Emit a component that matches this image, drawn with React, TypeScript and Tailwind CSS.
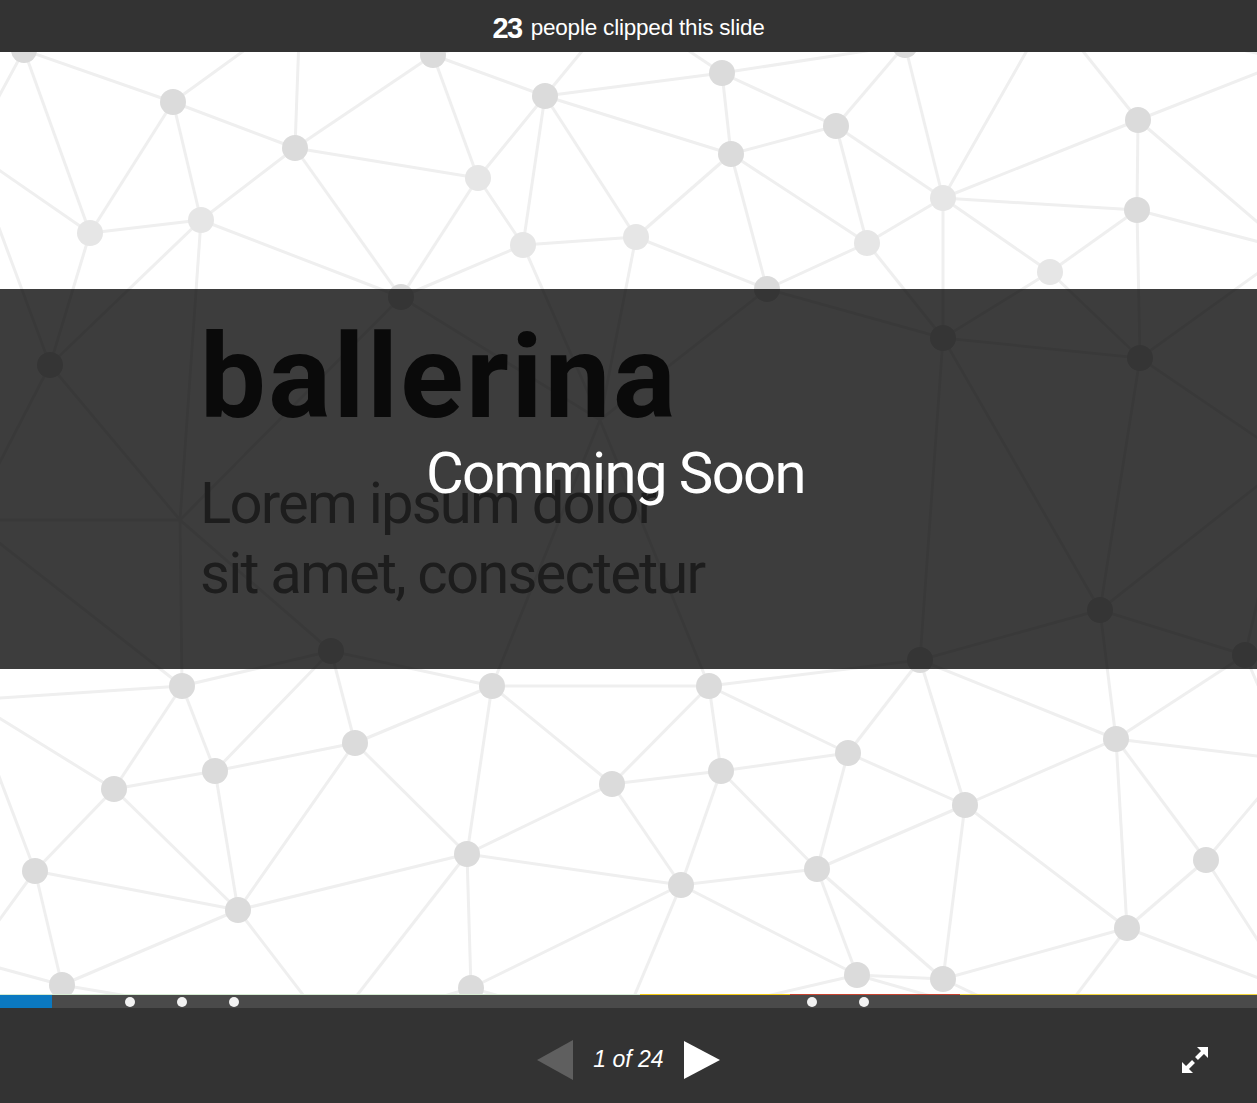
import React from 'react';

// Slide background: a light network of nodes joined by a Delaunay mesh
// third value: 1 = lighter node, 2 = mesh point only (no circle)
type Node = [number, number, number?];

const nodes: Node[] = [
  // upper band
  [24, 50], [173, 102], [295, 148], [433, 55], [545, 96], [478, 178, 1], [722, 73], [731, 154],
  [836, 126], [905, 45], [943, 198, 1], [1138, 120], [1137, 210], [90, 233, 1], [201, 220, 1],
  [523, 245, 1], [636, 237, 1], [867, 243, 1], [1050, 272, 1], [767, 289], [401, 297],
  [-30, 150], [1290, 60], [1290, 250], [300, 10], [620, 5], [1050, 10],
  // hidden behind the overlay
  [50, 365], [943, 338], [1140, 358], [1100, 610], [331, 651], [920, 660], [1245, 655],
  [600, 420, 2], [180, 520, 2], [-30, 520], [1290, 460],
  // lower band
  [182, 686], [492, 686], [709, 686], [355, 743], [215, 771], [114, 789], [612, 784], [721, 771],
  [848, 753], [1116, 739], [965, 805], [467, 854], [35, 871], [238, 910], [681, 885], [817, 869],
  [1206, 860], [1127, 928], [62, 985], [857, 975], [943, 979], [471, 988],
  [1290, 760], [-30, 700], [-30, 960], [1290, 990], [330, 1030], [620, 1030], [1050, 1030]
];

type Tri = { a: number; b: number; c: number; x: number; y: number; r: number };

function meshEdges(pts: [number, number][]): [number, number][] {
  const n = pts.length;
  const all: [number, number][] = [...pts, [-20000, -20000], [20000, -20000], [0, 20000]];
  const circ = (a: number, b: number, c: number): Tri => {
    const [ax, ay] = all[a];
    const [bx, by] = all[b];
    const [cx, cy] = all[c];
    const d = 2 * (ax * (by - cy) + bx * (cy - ay) + cx * (ay - by));
    const ux = ((ax * ax + ay * ay) * (by - cy) + (bx * bx + by * by) * (cy - ay) + (cx * cx + cy * cy) * (ay - by)) / d;
    const uy = ((ax * ax + ay * ay) * (cx - bx) + (bx * bx + by * by) * (ax - cx) + (cx * cx + cy * cy) * (bx - ax)) / d;
    return { a, b, c, x: ux, y: uy, r: (ax - ux) ** 2 + (ay - uy) ** 2 };
  };
  let tris: Tri[] = [circ(n, n + 1, n + 2)];
  for (let i = 0; i < n; i++) {
    const [px, py] = all[i];
    const bad = tris.filter(t => (px - t.x) ** 2 + (py - t.y) ** 2 < t.r);
    const count = new Map<string, [number, number]>();
    const seen = new Map<string, number>();
    bad.forEach(t => {
      [[t.a, t.b], [t.b, t.c], [t.c, t.a]].forEach(([u, v]) => {
        const k = u < v ? `${u}-${v}` : `${v}-${u}`;
        seen.set(k, (seen.get(k) || 0) + 1);
        count.set(k, [u, v]);
      });
    });
    tris = tris.filter(t => !bad.includes(t));
    count.forEach((e, k) => {
      if (seen.get(k) === 1) tris.push(circ(e[0], e[1], i));
    });
  }
  const out = new Map<string, [number, number]>();
  tris.forEach(t => {
    if (t.a >= n || t.b >= n || t.c >= n) return;
    [[t.a, t.b], [t.b, t.c], [t.c, t.a]].forEach(([u, v]) => {
      const k = u < v ? `${u}-${v}` : `${v}-${u}`;
      out.set(k, [u, v]);
    });
  });
  return [...out.values()];
}

function Network() {
  const pts = nodes.map(p => [p[0], p[1]] as [number, number]);
  const edges = meshEdges(pts).filter(([u, v]) => Math.hypot(pts[u][0] - pts[v][0], pts[u][1] - pts[v][1]) < 340);
  return (
    <svg className="absolute inset-0" width="1257" height="942" viewBox="0 52 1257 942">
      {edges.map(([u, v], i) => (
        <line key={i} x1={pts[u][0]} y1={pts[u][1]} x2={pts[v][0]} y2={pts[v][1]} stroke="#efefef" strokeWidth="3" />
      ))}
      {nodes.filter(p => p[2] !== 2).map((p, i) => (
        <circle key={i} cx={p[0]} cy={p[1]} r="13" fill={p[2] ? '#e6e6e6' : '#dbdbdb'} />
      ))}
    </svg>
  );
}

function FullscreenIcon() {
  return (
    <svg width="30" height="30" viewBox="0 0 30 30" fill="white">
      <polygon points="28,2 28,13 17,2" />
      <line x1="23" y1="7" x2="16.5" y2="13.5" stroke="white" strokeWidth="4" />
      <line x1="13.5" y1="16.5" x2="7" y2="23" stroke="white" strokeWidth="4" />
      <polygon points="2,28 2,17 13,28" />
    </svg>
  );
}

export default function App() {
  const penanda = [130, 182, 234, 812, 864];

  return (
    <div className="w-[1257px] h-[1103px] flex flex-col bg-[#333333] overflow-hidden" style={{ fontFamily: 'Roboto, "Noto Sans", sans-serif' }}>
      {/* Bar atas */}
      <div className="h-[52px] shrink-0 bg-[#333333] flex items-center justify-center gap-[9px] pt-[4px] text-white" style={{ fontFamily: '"Liberation Sans", Arial, sans-serif' }}>
        <span className="text-[29px] font-bold tracking-[-1.5px] leading-none">23</span>
        <span className="text-[22.5px] leading-none tracking-[-0.2px]">people clipped this slide</span>
      </div>

      {/* Slide */}
      <div className="relative h-[942px] shrink-0 bg-white overflow-hidden">
        <Network />
        <div className="relative pl-[200px] pt-[267px]">
          <h1 className="text-[117px] leading-none font-bold text-[#2a2a2a] tracking-[2.5px]">ballerina</h1>
          <p className="mt-[32px] text-[58px] leading-[70px] text-[#7a7a7a] tracking-[-1.8px]">
            Lorem ipsum dolor
            <br />
            sit amet, consectetur
          </p>
        </div>
        {/* Overlay */}
        <div className="absolute left-0 right-0 top-[237px] h-[380px] bg-black/[0.76] flex items-center justify-center pb-[12px] pr-[26px]">
          <span className="text-white text-[58px] leading-none tracking-[-1.6px]">Comming Soon</span>
        </div>
      </div>

      {/* Garis warna */}
      <div className="h-px shrink-0 flex">
        <div className="w-[640px] bg-[#d6ecd2]" />
        <div className="w-[150px] bg-[#f2c811]" />
        <div className="w-[170px] bg-[#c9442f]" />
        <div className="flex-1 bg-[#f2d43a]" />
      </div>

      {/* Progress */}
      <div className="relative h-[13px] shrink-0 bg-[#4a4a4a]">
        <div className="h-full w-[52px] bg-[#0b79c1]" />
        {penanda.map(x => (
          <div key={x} className="absolute top-[2px] w-[10px] h-[10px] -ml-[5px] rounded-full bg-[#f2f2f2]" style={{ left: x }} />
        ))}
      </div>

      {/* Kontrol */}
      <div className="flex-1 grid grid-cols-[1fr_auto_1fr] items-center pt-[8px] bg-[#333333]">
        <div />
        <div className="flex items-center gap-[20px]">
          <svg width="36" height="40" viewBox="0 0 36 40">
            <polygon points="36,0 36,40 0,20" fill="#5f5f5f" />
          </svg>
          <span className="text-white italic text-[23px] leading-none" style={{ fontFamily: '"Liberation Sans", Arial, sans-serif' }}>1 of 24</span>
          <svg width="36" height="38" viewBox="0 0 36 38">
            <polygon points="0,0 0,38 36,19" fill="#ffffff" />
          </svg>
        </div>
        <div className="justify-self-end mr-[47px] flex">
          <FullscreenIcon />
        </div>
      </div>
    </div>
  );
}
